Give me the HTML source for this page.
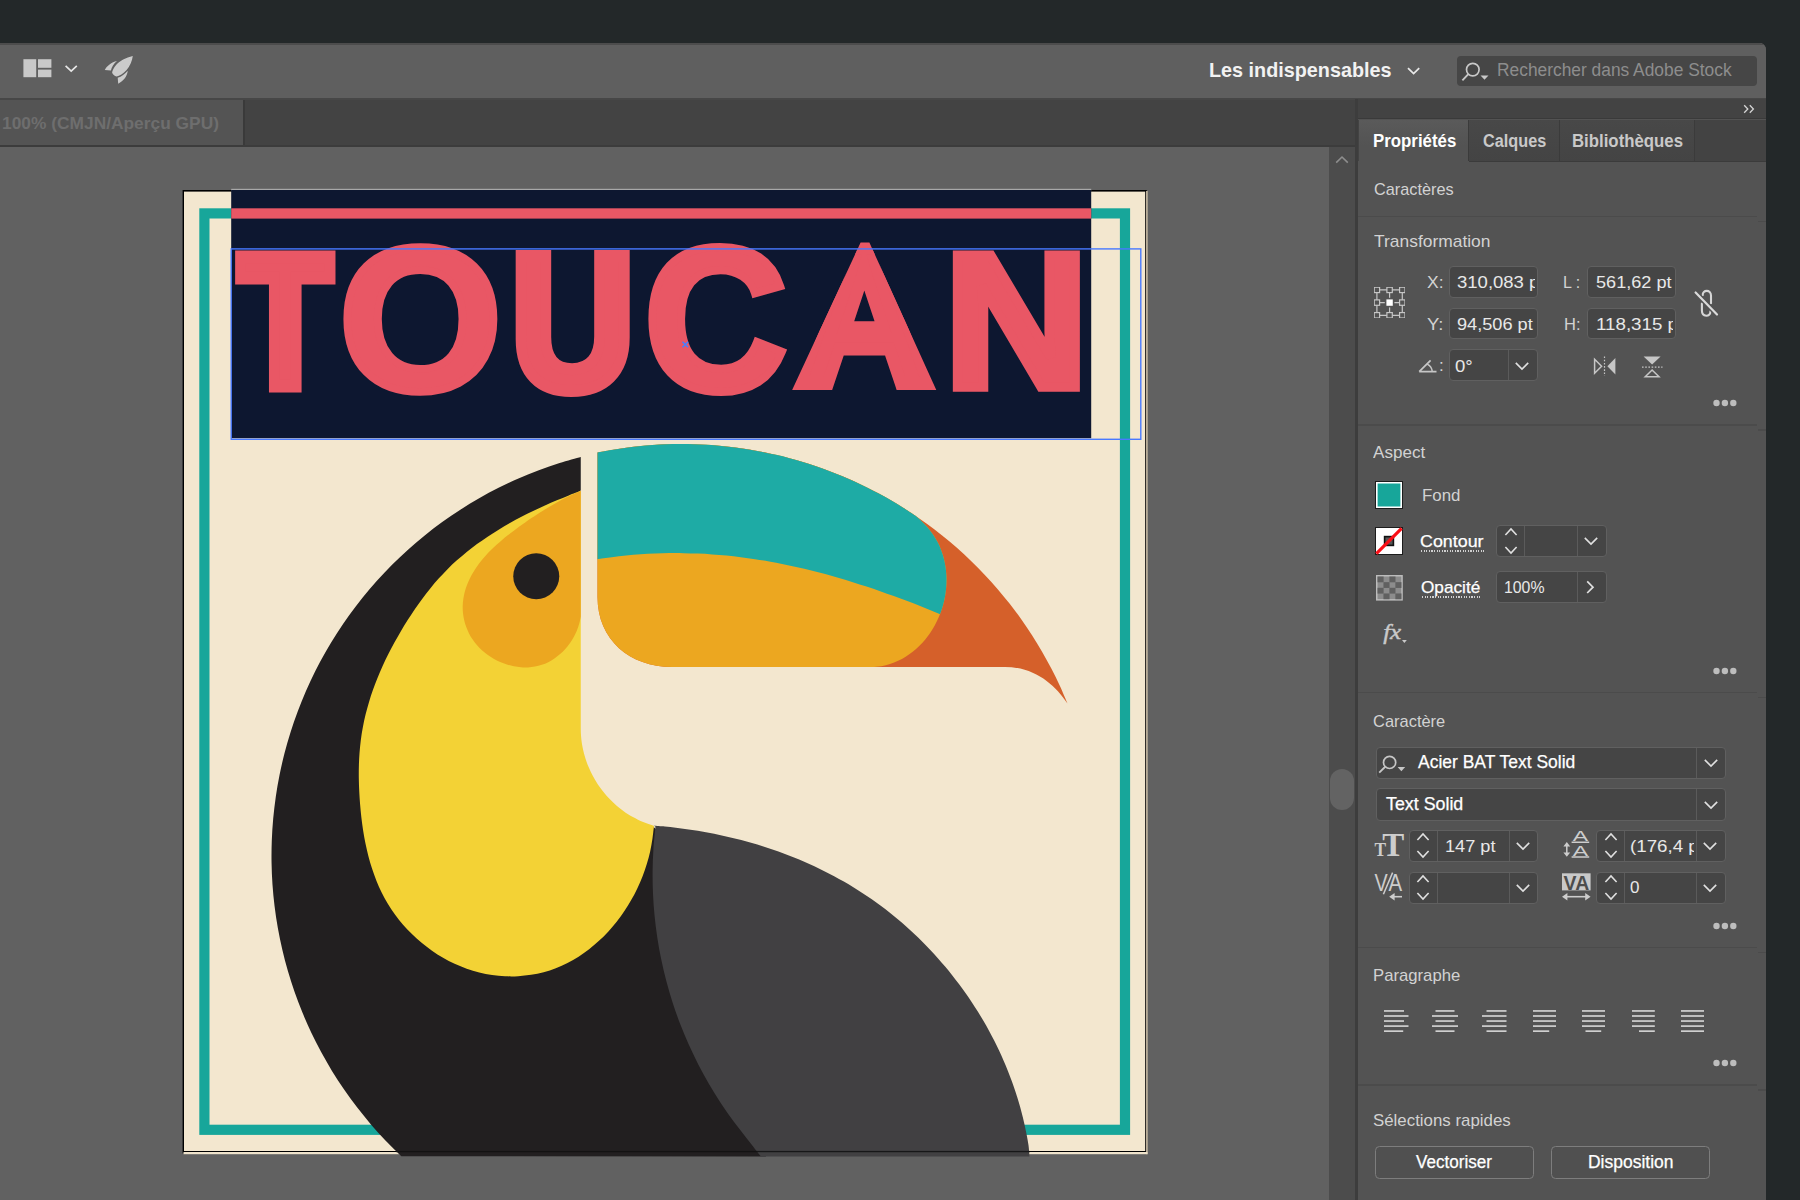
<!DOCTYPE html>
<html lang="fr"><head><meta charset="utf-8"><title>Toucan</title>
<style>
*{box-sizing:border-box;margin:0;padding:0}
html,body{width:1800px;height:1200px;overflow:hidden;background:#232829;font-family:"Liberation Sans",sans-serif;}
.abs{position:absolute}
#win{position:absolute;left:0;top:43px;width:1766px;height:1157px;background:#606060;border-top-right-radius:6.5px;overflow:hidden}
#toolbar{position:absolute;left:0;top:0;width:1766px;height:55px;background:#5f5f5f;border-top:2px solid #4c4c4c}
#tabbar{position:absolute;left:0;top:55px;width:1357px;height:104px;}
.t{position:absolute;white-space:nowrap;line-height:1;transform-origin:0 0}
</style></head><body>
<div id="win">
 <div id="toolbar"></div>
 <!-- line under toolbar -->
 <div class="abs" style="left:0;top:54.5px;width:1766px;height:2px;background:#474747"></div>
 <!-- doc tab bar -->
 <div class="abs" style="left:0;top:56.5px;width:1357px;height:46px;background:#434343"></div>
 <div class="abs" style="left:0;top:56.5px;width:245px;height:46px;background:#545454;border-right:2px solid #3a3a3a"></div>
 <div class="abs" style="left:0;top:102px;width:1357px;height:2px;background:#3c3c3c"></div>
 <!-- canvas -->
 <div class="abs" style="left:0;top:104px;width:1329px;height:1053px;background:#616161"></div>
 <!-- scrollbar -->
 <div class="abs" style="left:1328.5px;top:104px;width:27px;height:1053px;background:#4c4c4c"></div>
 <div class="abs" style="left:1330px;top:725.5px;width:24px;height:41.5px;border-radius:12px;background:#636363"></div>
 <svg class="abs" style="left:1334px;top:112px" width="16" height="10" viewBox="0 0 16 10"><path d="M2.2,7.6 L8,2 L13.8,7.6" fill="none" stroke="#8e8e8e" stroke-width="1.6"/></svg>
 <div class="abs" style="left:1355px;top:56px;width:3px;height:1101px;background:#3d3d3d"></div>
 <!-- toolbar icons -->
 <svg class="abs" style="left:22px;top:12px" width="112" height="30" viewBox="22 55 112 30">
  <rect x="23.4" y="59.2" width="12.8" height="18" fill="#c9c9c9"/><rect x="38" y="59.2" width="13.4" height="8.6" fill="#c9c9c9"/><rect x="38" y="69.6" width="13.4" height="7.6" fill="#c9c9c9"/>
  <path d="M65.6,65.8 L71.2,71 L76.8,65.8" fill="none" stroke="#e6e6e6" stroke-width="1.7"/>
  <path d="M132.8,55.9 C126,57.5 119.5,60.8 116.5,64.5 C113.8,67.8 112.3,70.5 112.1,72.6 C112.4,74.3 114.6,76.4 116.6,76.4 C119.5,76 123.2,73.6 126.6,70 C129.8,66.4 132.2,61 132.8,55.9Z M117,60.9 C111.5,62 106.8,65.8 104.8,70 L110.9,70.5 C111.6,66.8 113.8,63.6 117,60.9Z M127.7,70.8 C127.4,76 123.6,81 118.2,83.7 L117.7,77.8 C121.5,76.6 125,74.2 127.7,70.8Z" fill="#cbcbcb"/>
 </svg>
 <svg class="abs" style="left:1405px;top:22px" width="18" height="12" viewBox="0 0 18 12"><path d="M3,3.2 L8.6,8.6 L14.2,3.2" fill="none" stroke="#e8e8e8" stroke-width="1.8"/></svg>
 <div class="abs" style="left:1456.5px;top:12.8px;width:300.5px;height:30.4px;background:#464646;border-radius:4px"></div>
 <svg class="abs" style="left:1460px;top:18px" width="32" height="22" viewBox="0 0 32 22"><circle cx="12.8" cy="8.6" r="6.3" fill="none" stroke="#c8c8c8" stroke-width="1.7"/><path d="M8.3,13.2 L2.4,19.4" stroke="#c8c8c8" stroke-width="1.9"/><path d="M20.5,14.4 h8 l-4,4.4z" fill="#c8c8c8"/></svg>
<svg id="art" width="1329" height="1053" viewBox="0 147 1329 1053" style="position:absolute;left:0;top:104px">
<rect x="182.6" y="190" width="964.2" height="963.4" fill="#000"/>
<rect x="1146" y="191" width="1.8" height="963.2" fill="#b9ad98"/>
<rect x="183.5" y="1152" width="964" height="2.2" fill="#efe3cb"/>
<rect x="184" y="191.6" width="961.2" height="959.4" fill="#f3e7cf"/>
<rect x="204.4" y="213.4" width="920.6" height="916.4" fill="none" stroke="#17a69a" stroke-width="10.2"/>
<rect x="231.2" y="188.8" width="860" height="2" fill="#a8a8a8"/>
<rect x="231.2" y="190" width="860" height="248.2" fill="#0d1730"/>
<rect x="231.2" y="208.3" width="860" height="10.3" fill="#e95765"/>
<path d="M580.75,457.02 C577.23,458.03 566.60,460.86 559.61,463.07 C552.63,465.27 545.69,467.66 538.83,470.24 C531.97,472.81 525.17,475.57 518.45,478.50 C511.74,481.44 505.10,484.56 498.55,487.85 C492.00,491.14 485.53,494.60 479.17,498.24 C472.81,501.87 466.54,505.68 460.38,509.65 C454.22,513.62 448.15,517.75 442.22,522.04 C436.28,526.34 430.44,530.79 424.74,535.39 C419.04,539.99 413.45,544.76 408.01,549.65 C402.56,554.55 397.23,559.61 392.06,564.79 C386.88,569.97 381.83,575.30 376.93,580.75 C372.04,586.20 367.28,591.79 362.69,597.50 C358.09,603.20 353.64,609.04 349.35,614.98 C345.07,620.92 340.93,626.99 336.97,633.15 C333.01,639.31 329.20,645.59 325.57,651.96 C321.95,658.32 318.48,664.79 315.20,671.34 C311.91,677.89 308.80,684.54 305.87,691.25 C302.94,697.97 300.19,704.77 297.62,711.64 C295.05,718.50 292.67,725.44 290.47,732.43 C288.27,739.42 286.26,746.48 284.44,753.57 C282.61,760.67 280.98,767.82 279.54,775.01 C278.10,782.19 276.85,789.42 275.79,796.68 C274.74,803.93 273.88,811.21 273.21,818.51 C272.54,825.81 272.07,833.13 271.79,840.45 C271.52,847.77 271.44,855.11 271.55,862.44 C271.66,869.77 271.98,877.10 272.48,884.41 C272.99,891.72 273.69,899.02 274.58,906.30 C275.48,913.57 276.57,920.83 277.85,928.04 C279.13,935.25 280.60,942.44 282.27,949.58 C283.93,956.71 285.79,963.82 287.83,970.85 C289.87,977.89 292.11,984.88 294.52,991.80 C296.94,998.71 299.54,1005.58 302.32,1012.36 C305.10,1019.13 308.07,1025.85 311.21,1032.47 C314.34,1039.09 317.66,1045.64 321.15,1052.08 C324.64,1058.52 328.30,1064.88 332.13,1071.13 C335.95,1077.38 339.95,1083.54 344.11,1089.57 C348.26,1095.61 352.58,1101.54 357.05,1107.34 C361.52,1113.15 366.15,1118.84 370.92,1124.40 C375.70,1129.96 380.63,1135.40 385.69,1140.70 C390.75,1145.99 398.70,1153.60 401.30,1156.18 L766,1156.5 L720,1000 L690,862 L653.10,826.50 C652.19,826.24 649.42,825.51 647.62,824.92 C645.81,824.32 644.02,823.64 642.26,822.93 C640.50,822.21 638.77,821.44 637.06,820.61 C635.35,819.79 633.67,818.92 632.01,817.99 C630.36,817.07 628.73,816.09 627.14,815.07 C625.54,814.06 623.97,812.99 622.44,811.88 C620.91,810.77 619.40,809.61 617.94,808.41 C616.47,807.22 615.03,805.98 613.63,804.70 C612.23,803.42 610.86,802.10 609.53,800.75 C608.21,799.39 606.91,798.00 605.66,796.58 C604.41,795.15 603.19,793.69 602.01,792.20 C600.84,790.71 599.70,789.18 598.61,787.63 C597.52,786.07 596.46,784.49 595.46,782.88 C594.45,781.27 593.48,779.63 592.56,777.97 C591.64,776.31 590.77,774.62 589.94,772.91 C589.11,771.20 588.33,769.47 587.60,767.72 C586.87,765.97 586.18,764.20 585.55,762.41 C584.92,760.62 584.33,758.82 583.80,757.00 C583.27,755.18 582.79,753.34 582.36,751.49 C581.94,749.65 581.57,747.79 581.25,745.92 C580.93,744.05 580.67,742.17 580.46,740.28 C580.26,738.40 580.12,736.50 580.02,734.60 C579.92,732.70 579.88,729.85 579.85,728.90 L579.75,492.5 L580.75,490 Z" fill="#221f20"/>
<path d="M580.75,490.80 C578.75,491.57 572.75,493.86 568.76,495.45 C564.77,497.04 560.80,498.66 556.83,500.34 C552.86,502.01 548.88,503.74 544.93,505.52 C540.97,507.30 537.02,509.13 533.11,511.02 C529.19,512.91 525.28,514.85 521.42,516.86 C517.55,518.87 513.71,520.94 509.91,523.07 C506.12,525.20 502.35,527.40 498.64,529.66 C494.93,531.93 491.26,534.26 487.65,536.67 C484.04,539.07 480.48,541.55 476.99,544.10 C473.50,546.66 470.07,549.28 466.71,551.99 C463.36,554.70 460.07,557.49 456.87,560.36 C453.67,563.23 450.54,566.19 447.51,569.23 C444.47,572.27 441.52,575.40 438.65,578.59 C435.78,581.79 432.99,585.07 430.27,588.41 C427.55,591.75 424.91,595.16 422.34,598.63 C419.76,602.09 417.26,605.63 414.81,609.20 C412.37,612.77 409.99,616.40 407.67,620.07 C405.34,623.74 403.08,627.45 400.87,631.19 C398.66,634.94 396.50,638.72 394.41,642.53 C392.33,646.35 390.30,650.20 388.35,654.08 C386.41,657.97 384.52,661.88 382.73,665.83 C380.94,669.78 379.22,673.75 377.59,677.76 C375.97,681.77 374.43,685.81 372.99,689.87 C371.55,693.94 370.20,698.03 368.96,702.15 C367.73,706.27 366.59,710.42 365.56,714.59 C364.54,718.76 363.63,722.96 362.84,727.18 C362.05,731.40 361.38,735.64 360.83,739.90 C360.28,744.16 359.86,748.45 359.54,752.75 C359.21,757.04 359.01,761.36 358.89,765.68 C358.77,770.00 358.76,774.34 358.82,778.68 C358.89,783.02 359.04,787.37 359.26,791.71 C359.48,796.05 359.77,800.40 360.13,804.74 C360.48,809.08 360.90,813.42 361.41,817.74 C361.92,822.07 362.49,826.38 363.17,830.67 C363.85,834.96 364.61,839.24 365.48,843.48 C366.35,847.73 367.32,851.95 368.41,856.14 C369.50,860.32 370.69,864.49 372.02,868.59 C373.35,872.69 374.80,876.76 376.40,880.75 C378.00,884.75 379.74,888.69 381.64,892.54 C383.54,896.38 385.60,900.16 387.82,903.83 C390.04,907.50 392.44,911.08 394.97,914.55 C397.51,918.02 400.20,921.40 403.03,924.66 C405.86,927.91 408.84,931.06 411.94,934.09 C415.03,937.11 418.27,940.02 421.62,942.79 C424.96,945.56 428.43,948.22 432.00,950.71 C435.57,953.20 439.26,955.56 443.03,957.74 C446.80,959.91 450.67,961.94 454.62,963.78 C458.57,965.61 462.61,967.28 466.71,968.73 C470.81,970.19 475.00,971.46 479.23,972.50 C483.46,973.55 487.77,974.39 492.08,975.02 C496.39,975.65 500.76,976.06 505.11,976.26 C509.45,976.46 513.83,976.45 518.15,976.22 C522.48,975.98 526.80,975.54 531.05,974.87 C535.31,974.20 539.53,973.31 543.66,972.20 C547.79,971.09 551.85,969.75 555.82,968.22 C559.79,966.69 563.68,964.93 567.48,963.00 C571.27,961.07 574.98,958.93 578.58,956.64 C582.19,954.34 585.70,951.86 589.10,949.23 C592.50,946.60 595.80,943.80 598.98,940.87 C602.16,937.94 605.24,934.86 608.19,931.66 C611.13,928.46 613.97,925.12 616.67,921.69 C619.38,918.26 621.96,914.70 624.40,911.06 C626.84,907.42 629.16,903.68 631.33,899.87 C633.50,896.06 635.53,892.15 637.41,888.20 C639.29,884.26 641.03,880.23 642.60,876.17 C644.18,872.11 645.61,868.00 646.87,863.86 C648.13,859.73 649.23,855.55 650.16,851.38 C651.09,847.20 651.80,843.04 652.44,838.81 C653.08,834.58 653.74,828.13 654.00,826.00 C653.09,825.34 650.32,824.61 648.52,824.02 C646.71,823.42 644.92,822.74 643.16,822.03 C641.40,821.31 639.67,820.54 637.96,819.71 C636.25,818.89 634.57,818.02 632.91,817.09 C631.26,816.17 629.63,815.19 628.04,814.17 C626.44,813.16 624.87,812.09 623.34,810.98 C621.81,809.87 620.30,808.71 618.84,807.51 C617.37,806.32 615.93,805.08 614.53,803.80 C613.13,802.52 611.76,801.20 610.43,799.85 C609.11,798.49 607.81,797.10 606.56,795.68 C605.31,794.25 604.09,792.79 602.91,791.30 C601.74,789.81 600.60,788.28 599.51,786.73 C598.42,785.17 597.36,783.59 596.36,781.98 C595.35,780.37 594.38,778.73 593.46,777.07 C592.54,775.41 591.67,773.72 590.84,772.01 C590.01,770.30 589.23,768.57 588.50,766.82 C587.77,765.07 587.08,763.30 586.45,761.51 C585.82,759.72 585.23,757.92 584.70,756.10 C584.17,754.28 583.69,752.44 583.26,750.59 C582.84,748.75 582.47,746.89 582.15,745.02 C581.83,743.15 581.57,741.27 581.36,739.38 C581.16,737.50 581.02,735.60 580.92,733.70 C580.82,731.80 580.78,728.95 580.75,728.00 Z" fill="#f3d235"/>
<path d="M580.75,491.00 C579.63,491.46 576.24,492.76 574.05,493.74 C571.87,494.72 569.75,495.80 567.63,496.86 C565.51,497.92 563.41,499.00 561.33,500.11 C559.24,501.22 557.17,502.34 555.12,503.49 C553.06,504.64 551.03,505.81 549.00,507.01 C546.97,508.20 544.96,509.42 542.96,510.65 C540.96,511.89 538.97,513.15 536.98,514.43 C535.00,515.71 533.03,517.02 531.06,518.35 C529.10,519.67 527.14,521.02 525.19,522.39 C523.23,523.77 521.28,525.16 519.34,526.58 C517.39,527.99 515.44,529.43 513.51,530.89 C511.58,532.36 509.64,533.84 507.73,535.36 C505.82,536.87 503.92,538.41 502.06,539.99 C500.19,541.56 498.35,543.16 496.54,544.80 C494.74,546.44 492.96,548.11 491.24,549.82 C489.52,551.53 487.83,553.27 486.20,555.05 C484.58,556.84 483.00,558.66 481.49,560.53 C479.98,562.39 478.53,564.30 477.16,566.26 C475.79,568.21 474.48,570.21 473.26,572.26 C472.04,574.31 470.89,576.42 469.85,578.56 C468.81,580.70 467.84,582.89 467.00,585.11 C466.17,587.32 465.42,589.58 464.81,591.85 C464.20,594.13 463.70,596.44 463.35,598.75 C463.00,601.07 462.78,603.41 462.71,605.75 C462.64,608.09 462.73,610.45 462.96,612.79 C463.19,615.12 463.57,617.47 464.09,619.77 C464.61,622.07 465.28,624.36 466.08,626.59 C466.88,628.82 467.83,631.02 468.90,633.14 C469.97,635.26 471.18,637.34 472.51,639.32 C473.84,641.30 475.30,643.21 476.87,645.02 C478.44,646.83 480.14,648.56 481.91,650.18 C483.69,651.80 485.58,653.34 487.53,654.76 C489.49,656.18 491.54,657.50 493.64,658.71 C495.74,659.91 497.91,661.01 500.13,661.98 C502.34,662.95 504.61,663.81 506.90,664.54 C509.20,665.26 511.54,665.86 513.88,666.32 C516.22,666.78 518.59,667.11 520.95,667.29 C523.30,667.47 525.68,667.52 528.02,667.40 C530.36,667.29 532.70,667.03 534.99,666.61 C537.28,666.18 539.56,665.60 541.78,664.86 C543.99,664.12 546.17,663.20 548.27,662.14 C550.38,661.09 552.44,659.87 554.41,658.53 C556.38,657.19 558.29,655.71 560.10,654.12 C561.91,652.53 563.65,650.81 565.27,649.01 C566.90,647.21 568.44,645.29 569.85,643.30 C571.27,641.32 572.58,639.23 573.76,637.09 C574.94,634.96 576.00,632.73 576.91,630.48 C577.83,628.22 578.61,625.86 579.25,623.56 C579.88,621.26 580.50,617.84 580.75,616.70 Z" fill="#eca720"/>
<circle cx="536.25" cy="576.25" r="23" fill="#221f20"/>
<path d="M653.80,825.80 C655.64,825.92 661.16,826.22 664.83,826.54 C668.50,826.86 672.15,827.30 675.82,827.74 C679.48,828.18 683.14,828.66 686.80,829.18 C690.45,829.70 694.11,830.26 697.76,830.86 C701.41,831.47 705.06,832.11 708.70,832.80 C712.34,833.48 715.97,834.21 719.60,834.98 C723.23,835.75 726.85,836.56 730.46,837.42 C734.07,838.27 737.67,839.17 741.26,840.11 C744.84,841.05 748.42,842.03 751.99,843.06 C755.55,844.09 759.10,845.16 762.64,846.27 C766.18,847.39 769.70,848.54 773.20,849.75 C776.71,850.95 780.20,852.19 783.67,853.48 C787.14,854.78 790.59,856.11 794.03,857.49 C797.46,858.87 800.87,860.30 804.26,861.77 C807.65,863.24 811.02,864.76 814.37,866.32 C817.72,867.88 821.04,869.49 824.34,871.14 C827.64,872.79 830.91,874.49 834.16,876.23 C837.41,877.98 840.63,879.77 843.83,881.60 C847.02,883.44 850.19,885.32 853.33,887.24 C856.47,889.17 859.58,891.14 862.66,893.16 C865.74,895.18 868.79,897.24 871.81,899.35 C874.82,901.46 877.81,903.62 880.77,905.82 C883.72,908.02 886.65,910.26 889.54,912.55 C892.43,914.83 895.28,917.17 898.11,919.54 C900.93,921.91 903.72,924.32 906.48,926.78 C909.23,929.23 911.96,931.73 914.64,934.27 C917.33,936.81 919.98,939.38 922.59,942.00 C925.21,944.61 927.79,947.27 930.33,949.96 C932.87,952.66 935.37,955.39 937.84,958.15 C940.30,960.92 942.73,963.72 945.12,966.56 C947.51,969.40 949.85,972.27 952.16,975.17 C954.47,978.08 956.73,981.02 958.96,983.99 C961.18,986.96 963.36,989.96 965.50,993.00 C967.64,996.03 969.73,999.09 971.78,1002.19 C973.83,1005.28 975.84,1008.40 977.80,1011.55 C979.76,1014.70 981.67,1017.88 983.54,1021.08 C985.41,1024.29 987.23,1027.52 989.00,1030.77 C990.78,1034.03 992.50,1037.31 994.18,1040.61 C995.85,1043.91 997.48,1047.24 999.06,1050.59 C1000.63,1053.94 1002.16,1057.31 1003.63,1060.70 C1005.11,1064.10 1006.53,1067.51 1007.90,1070.94 C1009.27,1074.37 1010.59,1077.82 1011.85,1081.29 C1013.11,1084.76 1014.32,1088.25 1015.48,1091.75 C1016.63,1095.26 1017.73,1098.78 1018.77,1102.31 C1019.82,1105.85 1020.80,1109.40 1021.73,1112.96 C1022.66,1116.52 1023.53,1120.10 1024.34,1123.69 C1025.16,1127.28 1025.91,1130.88 1026.61,1134.49 C1027.30,1138.11 1028.03,1141.70 1028.51,1145.36 C1028.99,1149.03 1029.33,1154.64 1029.50,1156.50 L761.00,1156.50 C758.70,1153.57 751.77,1144.78 747.18,1138.91 C742.60,1133.05 737.88,1127.30 733.47,1121.32 C729.06,1115.33 724.81,1109.22 720.72,1103.01 C716.64,1096.80 712.72,1090.47 708.98,1084.05 C705.24,1077.62 701.66,1071.09 698.27,1064.48 C694.88,1057.86 691.66,1051.15 688.63,1044.36 C685.60,1037.57 682.75,1030.69 680.09,1023.75 C677.43,1016.81 674.95,1009.79 672.66,1002.72 C670.38,995.65 668.28,988.50 666.38,981.32 C664.48,974.13 662.77,966.88 661.26,959.60 C659.74,952.33 658.42,945.00 657.31,937.65 C656.19,930.30 655.26,922.91 654.54,915.51 C653.82,908.12 653.30,900.69 652.97,893.26 C652.65,885.84 652.53,878.39 652.60,870.96 C652.68,863.53 652.95,856.08 653.43,848.67 C653.91,841.25 655.12,830.15 655.46,826.45 Z" fill="#414042"/>
<path d="M597.5,452.5 C600.69,452.06 610.14,450.19 616.48,449.18 C622.82,448.17 629.20,447.31 635.58,446.60 C641.96,445.89 648.36,445.32 654.77,444.91 C661.18,444.49 667.60,444.22 674.02,444.10 C680.44,443.98 686.87,444.01 693.29,444.19 C699.70,444.37 706.12,444.69 712.53,445.17 C718.93,445.64 725.33,446.26 731.70,447.03 C738.08,447.80 744.44,448.72 750.77,449.79 C757.10,450.85 763.42,452.06 769.69,453.42 C775.97,454.77 782.22,456.28 788.43,457.92 C794.63,459.57 800.81,461.36 806.93,463.29 C813.06,465.22 819.14,467.29 825.17,469.50 C831.20,471.71 837.18,474.06 843.10,476.55 C849.02,479.04 854.89,481.67 860.69,484.43 C866.48,487.18 872.22,490.08 877.89,493.10 C883.55,496.13 889.15,499.29 894.67,502.57 C900.19,505.85 905.63,509.27 910.99,512.80 C916.35,516.33 921.64,520.00 926.83,523.78 C932.02,527.55 937.13,531.46 942.14,535.47 C947.15,539.49 952.07,543.62 956.89,547.86 C961.71,552.11 966.44,556.46 971.06,560.92 C975.68,565.38 980.20,569.96 984.60,574.63 C989.01,579.30 993.31,584.07 997.50,588.94 C1001.69,593.81 1005.76,598.78 1009.72,603.84 C1013.68,608.89 1017.52,614.05 1021.24,619.28 C1024.96,624.51 1028.56,629.84 1032.03,635.24 C1035.50,640.64 1038.85,646.13 1042.07,651.68 C1045.29,657.24 1048.39,662.88 1051.34,668.57 C1054.30,674.27 1057.13,680.05 1059.82,685.87 C1062.51,691.70 1066.22,700.60 1067.49,703.55 C1055,685 1035,667 1005,667 L672,667 C630,667 597.5,640 597.5,597 Z" fill="#d5602a"/>
<path d="M597.5,452.5 C599.79,452.21 606.58,450.85 611.13,450.07 C615.67,449.28 620.23,448.58 624.80,447.95 C629.37,447.31 633.95,446.76 638.54,446.28 C643.12,445.80 647.72,445.40 652.32,445.07 C656.92,444.75 661.53,444.50 666.14,444.32 C670.75,444.15 675.36,444.05 679.97,444.03 C684.58,444.01 689.20,444.07 693.81,444.20 C698.42,444.34 703.03,444.55 707.63,444.83 C712.24,445.12 716.84,445.48 721.43,445.92 C726.02,446.36 730.60,446.88 735.18,447.47 C739.75,448.06 744.32,448.73 748.87,449.47 C753.42,450.21 757.96,451.03 762.49,451.93 C767.01,452.82 771.52,453.79 776.02,454.84 C780.51,455.88 784.99,457.00 789.44,458.19 C793.90,459.38 798.33,460.65 802.75,461.99 C807.16,463.33 811.55,464.74 815.92,466.23 C820.29,467.72 824.63,469.28 828.94,470.91 C833.26,472.54 837.55,474.24 841.80,476.01 C846.06,477.78 850.29,479.63 854.49,481.54 C858.69,483.45 862.85,485.44 866.98,487.49 C871.11,489.54 875.21,491.66 879.27,493.85 C883.33,496.04 887.36,498.29 891.34,500.61 C895.33,502.93 899.28,505.32 903.18,507.77 C907.09,510.23 912.85,514.07 914.78,515.33 C915.92,516.31 919.43,519.19 921.61,521.25 C923.78,523.31 925.93,525.45 927.85,527.68 C929.78,529.91 931.55,532.25 933.17,534.65 C934.79,537.05 936.25,539.54 937.57,542.08 C938.89,544.63 940.06,547.25 941.08,549.91 C942.10,552.57 942.97,555.29 943.70,558.04 C944.43,560.80 945.01,563.60 945.46,566.42 C945.90,569.23 946.20,572.09 946.37,574.95 C946.53,577.81 946.55,580.69 946.44,583.56 C946.33,586.43 946.08,589.32 945.69,592.18 C945.31,595.04 944.79,597.91 944.15,600.73 C943.50,603.56 942.72,606.37 941.81,609.14 C940.91,611.90 939.87,614.64 938.71,617.32 C937.55,619.99 936.26,622.63 934.86,625.19 C933.46,627.75 931.93,630.26 930.30,632.67 C928.67,635.08 926.92,637.42 925.07,639.65 C923.21,641.89 921.25,644.04 919.19,646.06 C917.13,648.08 914.96,650.01 912.71,651.79 C910.45,653.57 908.10,655.24 905.66,656.75 C903.22,658.27 900.68,659.65 898.07,660.86 C895.46,662.07 892.76,663.14 889.98,664.02 C887.21,664.90 884.35,665.64 881.43,666.13 C878.52,666.63 873.99,666.86 872.50,667.00 L672,667 C630,667 597.5,640 597.5,597 Z" fill="#eca720"/>
<clipPath id="tc"><path d="M597.50,559.25 C599.87,558.92 606.98,557.88 611.74,557.27 C616.51,556.66 621.32,556.07 626.11,555.58 C630.90,555.09 635.69,554.68 640.48,554.33 C645.27,553.99 650.06,553.72 654.85,553.52 C659.64,553.32 664.44,553.19 669.23,553.12 C674.01,553.06 678.80,553.07 683.59,553.15 C688.37,553.22 693.15,553.37 697.93,553.57 C702.71,553.78 707.48,554.06 712.25,554.40 C717.02,554.74 721.79,555.14 726.54,555.61 C731.30,556.07 736.05,556.61 740.80,557.20 C745.54,557.79 750.28,558.44 755.01,559.15 C759.73,559.87 764.45,560.64 769.16,561.47 C773.87,562.30 778.57,563.19 783.26,564.14 C787.95,565.09 792.63,566.09 797.30,567.15 C801.97,568.20 806.63,569.31 811.28,570.47 C815.92,571.63 820.56,572.85 825.19,574.10 C829.81,575.36 834.43,576.67 839.03,578.01 C843.64,579.36 848.23,580.75 852.81,582.19 C857.39,583.62 861.97,585.09 866.53,586.60 C871.09,588.11 875.64,589.66 880.18,591.24 C884.72,592.82 889.24,594.44 893.76,596.09 C898.28,597.74 902.78,599.42 907.28,601.12 C911.77,602.83 916.25,604.56 920.73,606.32 C925.20,608.08 929.66,609.86 934.11,611.67 C938.55,613.47 942.99,615.30 947.42,617.14 C951.84,618.98 956.26,620.85 960.66,622.72 C965.06,624.60 969.46,626.49 973.84,628.39 C978.22,630.30 982.58,632.20 986.94,634.14 C991.30,636.07 997.82,639.02 1000.00,640.00 L1100,640 L1100,400 L500,400 L500,559.25 Z"/></clipPath>
<path d="M597.5,452.5 C599.79,452.21 606.58,450.85 611.13,450.07 C615.67,449.28 620.23,448.58 624.80,447.95 C629.37,447.31 633.95,446.76 638.54,446.28 C643.12,445.80 647.72,445.40 652.32,445.07 C656.92,444.75 661.53,444.50 666.14,444.32 C670.75,444.15 675.36,444.05 679.97,444.03 C684.58,444.01 689.20,444.07 693.81,444.20 C698.42,444.34 703.03,444.55 707.63,444.83 C712.24,445.12 716.84,445.48 721.43,445.92 C726.02,446.36 730.60,446.88 735.18,447.47 C739.75,448.06 744.32,448.73 748.87,449.47 C753.42,450.21 757.96,451.03 762.49,451.93 C767.01,452.82 771.52,453.79 776.02,454.84 C780.51,455.88 784.99,457.00 789.44,458.19 C793.90,459.38 798.33,460.65 802.75,461.99 C807.16,463.33 811.55,464.74 815.92,466.23 C820.29,467.72 824.63,469.28 828.94,470.91 C833.26,472.54 837.55,474.24 841.80,476.01 C846.06,477.78 850.29,479.63 854.49,481.54 C858.69,483.45 862.85,485.44 866.98,487.49 C871.11,489.54 875.21,491.66 879.27,493.85 C883.33,496.04 887.36,498.29 891.34,500.61 C895.33,502.93 899.28,505.32 903.18,507.77 C907.09,510.23 912.85,514.07 914.78,515.33 C915.92,516.31 919.43,519.19 921.61,521.25 C923.78,523.31 925.93,525.45 927.85,527.68 C929.78,529.91 931.55,532.25 933.17,534.65 C934.79,537.05 936.25,539.54 937.57,542.08 C938.89,544.63 940.06,547.25 941.08,549.91 C942.10,552.57 942.97,555.29 943.70,558.04 C944.43,560.80 945.01,563.60 945.46,566.42 C945.90,569.23 946.20,572.09 946.37,574.95 C946.53,577.81 946.55,580.69 946.44,583.56 C946.33,586.43 946.08,589.32 945.69,592.18 C945.31,595.04 944.79,597.91 944.15,600.73 C943.50,603.56 942.72,606.37 941.81,609.14 C940.91,611.90 939.87,614.64 938.71,617.32 C937.55,619.99 936.26,622.63 934.86,625.19 C933.46,627.75 931.93,630.26 930.30,632.67 C928.67,635.08 926.92,637.42 925.07,639.65 C923.21,641.89 921.25,644.04 919.19,646.06 C917.13,648.08 914.96,650.01 912.71,651.79 C910.45,653.57 908.10,655.24 905.66,656.75 C903.22,658.27 900.68,659.65 898.07,660.86 C895.46,662.07 892.76,663.14 889.98,664.02 C887.21,664.90 884.35,665.64 881.43,666.13 C878.52,666.63 873.99,666.86 872.50,667.00 L672,667 C630,667 597.5,640 597.5,597 Z" fill="#1eaba5" clip-path="url(#tc)"/>
<rect x="396" y="1150.9" width="634" height="1.3" fill="#111" opacity=".85"/>
<g font-family="&quot;Liberation Sans&quot;, sans-serif" font-weight="bold" font-size="200" fill="#e95765" stroke="#e95765" stroke-linejoin="miter"><text stroke-width="14" transform="matrix(0.7614 0 0 0.9377 238.81 385.67)">T</text><text stroke-width="7.5" transform="matrix(1.0510 0 0 1.0220 338.80 390.17)">O</text><text stroke-width="12.5" transform="matrix(0.8591 0 0 0.9645 510.65 388.58)">U</text><text stroke-width="8" transform="matrix(0.9907 0 0 1.0220 644.34 390.17)">C</text><clipPath id="ac"><path d="M780,392 L791.2,392 L860.6,242.5 L869.4,242.5 L937.2,392 L950,392 L950,420 L780,420Z"/></clipPath><g clip-path="url(#ac)"><text stroke-width="13" transform="matrix(0.9539 0 0 0.9821 795.52 384.43)">A</text></g><text stroke-width="10" transform="matrix(0.9961 0 0 0.9568 944.53 386.52)">N</text></g>
<rect x="231.2" y="248.9" width="909.6" height="190.4" fill="none" stroke="#4879ff" stroke-width="1.4"/>
<path d="M682.5,341.7l5.6,5.6m0,-5.6l-5.6,5.6" stroke="#4a7dff" stroke-width="1.6" fill="none"/>
</svg>
<div class="abs" style="left:0;top:-43px;width:1766px;height:1200px">
<div class="abs" style="left:1358.00px;top:99.00px;width:408.00px;height:1101.00px;background:#535353"></div>
<div class="abs" style="left:1358.00px;top:99.00px;width:408.00px;height:19.00px;background:#434343"></div>
<div class="abs" style="left:1358.00px;top:117.70px;width:408.00px;height:1.80px;background:#3a3a3a"></div>
<div class="abs" style="left:1358.00px;top:119.50px;width:408.00px;height:41.50px;background:#434343"></div>
<div class="abs" style="left:1469.00px;top:119.50px;width:226.00px;height:41.50px;background:linear-gradient(#484848,#444444)"></div>
<div class="abs" style="left:1358.50px;top:119.50px;width:110.20px;height:43.00px;background:linear-gradient(#5a5a5a,#535353 60%)"></div>
<div class="abs" style="left:1467.90px;top:119.50px;width:1.60px;height:41.50px;background:#3b3b3b"></div>
<div class="abs" style="left:1558.90px;top:119.50px;width:1.60px;height:41.50px;background:#3b3b3b"></div>
<div class="abs" style="left:1693.90px;top:119.50px;width:1.60px;height:41.50px;background:#3b3b3b"></div>
<div class="abs" style="left:1468.70px;top:160.50px;width:297.30px;height:1.80px;background:#3b3b3b"></div>
<svg class="abs" style="left:1742.00px;top:103.00px" width="14" height="12" viewBox="0 0 14 12"><path d="M2.2,2.2 L5.8,6 L2.2,9.8 M7.8,2.2 L11.4,6 L7.8,9.8" fill="none" stroke="#d4d4d4" stroke-width="1.3"/></svg>
<div class="abs" style="left:1358.00px;top:215.70px;width:399.00px;height:1.20px;background:#4b4b4b"></div>
<div class="abs" style="left:1757.50px;top:220.70px;width:8.50px;height:1.20px;background:#4b4b4b"></div>
<div class="abs" style="left:1358.00px;top:424.40px;width:399.00px;height:1.20px;background:#4b4b4b"></div>
<div class="abs" style="left:1757.50px;top:429.40px;width:8.50px;height:1.20px;background:#4b4b4b"></div>
<div class="abs" style="left:1358.00px;top:691.90px;width:399.00px;height:1.20px;background:#4b4b4b"></div>
<div class="abs" style="left:1757.50px;top:696.90px;width:8.50px;height:1.20px;background:#4b4b4b"></div>
<div class="abs" style="left:1358.00px;top:946.90px;width:399.00px;height:1.20px;background:#4b4b4b"></div>
<div class="abs" style="left:1757.50px;top:951.90px;width:8.50px;height:1.20px;background:#4b4b4b"></div>
<div class="abs" style="left:1358.00px;top:1084.40px;width:399.00px;height:1.20px;background:#4b4b4b"></div>
<div class="abs" style="left:1757.50px;top:1089.40px;width:8.50px;height:1.20px;background:#4b4b4b"></div>
<svg class="abs" style="left:1712.00px;top:397.50px" width="26" height="10" viewBox="0 0 26 10"><circle cx="4.5" cy="5" r="3.2" fill="#bdbdbd"/><circle cx="12.9" cy="5" r="3.2" fill="#bdbdbd"/><circle cx="21.3" cy="5" r="3.2" fill="#bdbdbd"/></svg>
<svg class="abs" style="left:1712.00px;top:666.25px" width="26" height="10" viewBox="0 0 26 10"><circle cx="4.5" cy="5" r="3.2" fill="#bdbdbd"/><circle cx="12.9" cy="5" r="3.2" fill="#bdbdbd"/><circle cx="21.3" cy="5" r="3.2" fill="#bdbdbd"/></svg>
<svg class="abs" style="left:1712.00px;top:920.75px" width="26" height="10" viewBox="0 0 26 10"><circle cx="4.5" cy="5" r="3.2" fill="#bdbdbd"/><circle cx="12.9" cy="5" r="3.2" fill="#bdbdbd"/><circle cx="21.3" cy="5" r="3.2" fill="#bdbdbd"/></svg>
<svg class="abs" style="left:1712.00px;top:1057.50px" width="26" height="10" viewBox="0 0 26 10"><circle cx="4.5" cy="5" r="3.2" fill="#bdbdbd"/><circle cx="12.9" cy="5" r="3.2" fill="#bdbdbd"/><circle cx="21.3" cy="5" r="3.2" fill="#bdbdbd"/></svg>
<div class="abs" style="left:1449.25px;top:265.75px;width:88.25px;height:31.75px;background:#454545;border:1px solid #606060;border-radius:4px;"></div>
<div class="abs" style="left:1586.75px;top:265.75px;width:89.00px;height:31.75px;background:#454545;border:1px solid #606060;border-radius:4px;"></div>
<div class="abs" style="left:1449.25px;top:307.50px;width:88.25px;height:31.75px;background:#454545;border:1px solid #606060;border-radius:4px;"></div>
<div class="abs" style="left:1586.75px;top:307.50px;width:89.00px;height:31.75px;background:#454545;border:1px solid #606060;border-radius:4px;"></div>
<div class="abs" style="left:1449.25px;top:349.25px;width:88.25px;height:31.25px;background:#454545;border:1px solid #606060;border-radius:4px;"></div>
<div class="abs" style="left:1508.15px;top:350.25px;width:1.20px;height:29.25px;background:#5b5b5b"></div>
<svg class="abs" style="left:1513.75px;top:359.60px" width="16" height="12" viewBox="0 0 16 12"><path d="M1.8,2.9 L8,9.1 L14.2,2.9" fill="none" stroke="#e0e0e0" stroke-width="1.6"/></svg>
<svg class="abs" style="left:1374.20px;top:287.20px" width="31.2" height="31.2" viewBox="0 0 31.2 31.2"><path d="M2.9,2.9H28.3V28.3H2.9Z M2.9,15.6H28.3 M15.6,2.9V28.3" fill="none" stroke="#c6c6c6" stroke-width="1.2"/><rect x="0.2" y="0.2" width="5.4" height="5.4" fill="#535353" stroke="#c6c6c6" stroke-width="1.2"/><rect x="0.2" y="12.9" width="5.4" height="5.4" fill="#535353" stroke="#c6c6c6" stroke-width="1.2"/><rect x="0.2" y="25.6" width="5.4" height="5.4" fill="#535353" stroke="#c6c6c6" stroke-width="1.2"/><rect x="12.9" y="0.2" width="5.4" height="5.4" fill="#535353" stroke="#c6c6c6" stroke-width="1.2"/><rect x="11.6" y="11.6" width="8" height="8" fill="#fff" stroke="#535353" stroke-width="1.6"/><rect x="12.9" y="25.6" width="5.4" height="5.4" fill="#535353" stroke="#c6c6c6" stroke-width="1.2"/><rect x="25.6" y="0.2" width="5.4" height="5.4" fill="#535353" stroke="#c6c6c6" stroke-width="1.2"/><rect x="25.6" y="12.9" width="5.4" height="5.4" fill="#535353" stroke="#c6c6c6" stroke-width="1.2"/><rect x="25.6" y="25.6" width="5.4" height="5.4" fill="#535353" stroke="#c6c6c6" stroke-width="1.2"/></svg>
<svg class="abs" style="left:1417.00px;top:357.00px" width="22" height="17" viewBox="0 0 22 17"><path d="M2.2,14.6 H19.5 M2.2,14.6 L13.6,3.4" fill="none" stroke="#c6c6c6" stroke-width="1.7"/><path d="M10.2,7.2 C13.2,8.6 14.9,11.2 15.2,14.4" fill="none" stroke="#c6c6c6" stroke-width="1.4"/></svg>
<svg class="abs" style="left:1592.00px;top:355.00px" width="26" height="22" viewBox="0 0 26 22"><path d="M2.6,4.2 L9.6,11.2 L2.6,18.2Z" fill="none" stroke="#c6c6c6" stroke-width="1.5"/><path d="M23.4,3 L15.4,11.2 L23.4,19.4Z" fill="#c6c6c6"/><path d="M12.5,1.5V21" stroke="#c6c6c6" stroke-width="1.2" stroke-dasharray="1.6,1.6"/></svg>
<svg class="abs" style="left:1641.00px;top:354.00px" width="22" height="26" viewBox="0 0 22 26"><path d="M2.6,2.6 H19.6 L11.1,10.6Z" fill="#c6c6c6"/><path d="M4.2,22.8 L11.1,16 L18,22.8Z" fill="none" stroke="#c6c6c6" stroke-width="1.5"/><path d="M1,13.2H21.5" stroke="#c6c6c6" stroke-width="1.2" stroke-dasharray="1.6,1.6"/></svg>
<svg class="abs" style="left:1690.00px;top:286.00px" width="32" height="34" viewBox="1690 286 32 34"><g fill="none" stroke="#d6d6d6" stroke-width="2.1" stroke-linecap="round"><path d="M1702.7,295.2 C1702.4,289.6 1711,289.2 1711,295.6 L1711,303.2"/><path d="M1701.9,303.6 L1701.9,310.6 C1701.9,317.4 1710.6,317.2 1710.4,311.4"/></g><path d="M1695.6,292.5 L1717,314.5" stroke="#535353" stroke-width="5"/><path d="M1695.6,292.5 L1717,314.5" stroke="#dadada" stroke-width="2.2" stroke-linecap="round"/></svg>
<div class="abs" style="left:1375.00px;top:480.50px;width:28.00px;height:28.25px;background:#17a69a;border:1px solid #1c1c1c;box-shadow:inset 0 0 0 1.6px #fff"></div>
<svg class="abs" style="left:1375.00px;top:527.00px" width="28" height="28" viewBox="0 0 28 28"><rect x="0.5" y="0.5" width="27" height="27" fill="#fff" stroke="#1c1c1c"/><rect x="9.6" y="9.6" width="8.8" height="8.8" fill="#555" stroke="#111" stroke-width="1.6"/><path d="M1.4,26.6 L26.6,1.4" stroke="#fa0f17" stroke-width="3.2"/></svg>
<div class="abs" style="left:1496.25px;top:524.50px;width:110.50px;height:32.50px;background:#454545;border:1px solid #606060;border-radius:4px;"></div>
<div class="abs" style="left:1523.90px;top:525.50px;width:1.20px;height:30.50px;background:#5b5b5b"></div>
<div class="abs" style="left:1576.90px;top:525.50px;width:1.20px;height:30.50px;background:#5b5b5b"></div>
<svg class="abs" style="left:1502.50px;top:526.30px" width="16" height="12" viewBox="0 0 16 12"><path d="M2.4,9 L8,3 L13.6,9" fill="none" stroke="#e0e0e0" stroke-width="1.6"/></svg>
<svg class="abs" style="left:1502.50px;top:543.50px" width="16" height="12" viewBox="0 0 16 12"><path d="M2.4,3 L8,9 L13.6,3" fill="none" stroke="#e0e0e0" stroke-width="1.6"/></svg>
<svg class="abs" style="left:1582.75px;top:535.00px" width="16" height="12" viewBox="0 0 16 12"><path d="M1.8,2.9 L8,9.1 L14.2,2.9" fill="none" stroke="#e0e0e0" stroke-width="1.6"/></svg>
<div class="abs" style="left:1421.00px;top:550.00px;width:63.00px;height:1.60px;background:repeating-linear-gradient(90deg,#d0d0d0 0 1.2px,transparent 1.2px 2.6px)"></div>
<div class="abs" style="left:1422.00px;top:596.40px;width:59.00px;height:1.60px;background:repeating-linear-gradient(90deg,#d0d0d0 0 1.2px,transparent 1.2px 2.6px)"></div>
<svg class="abs" style="left:1375.75px;top:575.00px" width="26.8" height="25.6" viewBox="0 0 26.8 25.6"><rect x="0.75" y="0.75" width="25.3" height="24.1" fill="#8c8c8c" stroke="#bcbcbc" stroke-width="1.5"/><rect x="1.5" y="1.5" width="6.1" height="5.8" fill="#606060"/><rect x="1.5" y="12.8" width="6.1" height="5.8" fill="#606060"/><rect x="7.45" y="7.15" width="6.1" height="5.8" fill="#606060"/><rect x="7.45" y="18.45" width="6.1" height="5.8" fill="#606060"/><rect x="13.4" y="1.5" width="6.1" height="5.8" fill="#606060"/><rect x="13.4" y="12.8" width="6.1" height="5.8" fill="#606060"/><rect x="19.35" y="7.15" width="6.1" height="5.8" fill="#606060"/><rect x="19.35" y="18.45" width="6.1" height="5.8" fill="#606060"/></svg>
<div class="abs" style="left:1496.25px;top:571.25px;width:110.50px;height:32.00px;background:#454545;border:1px solid #606060;border-radius:4px;"></div>
<div class="abs" style="left:1576.90px;top:572.25px;width:1.20px;height:30.00px;background:#5b5b5b"></div>
<svg class="abs" style="left:1583.00px;top:578.00px" width="14" height="18" viewBox="0 0 14 18"><path d="M4.2,3.4 L10,9.2 L4.2,15" fill="none" stroke="#e0e0e0" stroke-width="1.7"/></svg>
<div class="abs" style="left:1375.75px;top:746.75px;width:349.75px;height:32.00px;background:#454545;border:1px solid #606060;border-radius:4px;"></div>
<div class="abs" style="left:1696.15px;top:747.75px;width:1.20px;height:30.00px;background:#5b5b5b"></div>
<svg class="abs" style="left:1703.00px;top:757.40px" width="16" height="12" viewBox="0 0 16 12"><path d="M1.8,2.9 L8,9.1 L14.2,2.9" fill="none" stroke="#e0e0e0" stroke-width="1.6"/></svg>
<div class="abs" style="left:1375.75px;top:788.25px;width:349.75px;height:32.25px;background:#454545;border:1px solid #606060;border-radius:4px;"></div>
<div class="abs" style="left:1696.15px;top:789.25px;width:1.20px;height:30.25px;background:#5b5b5b"></div>
<svg class="abs" style="left:1703.00px;top:799.00px" width="16" height="12" viewBox="0 0 16 12"><path d="M1.8,2.9 L8,9.1 L14.2,2.9" fill="none" stroke="#e0e0e0" stroke-width="1.6"/></svg>
<svg class="abs" style="left:1377.00px;top:754.00px" width="30" height="20" viewBox="0 0 30 20"><circle cx="12.6" cy="8.4" r="6.1" fill="none" stroke="#c6c6c6" stroke-width="1.7"/><path d="M8.2,12.8 L2.2,18.6" stroke="#c6c6c6" stroke-width="1.9"/><path d="M20.6,13 h7.6 l-3.8,4.2z" fill="#c6c6c6"/></svg>
<div class="abs" style="left:1408.75px;top:830.00px;width:129.25px;height:31.75px;background:#454545;border:1px solid #606060;border-radius:4px;"></div>
<div class="abs" style="left:1436.90px;top:831.00px;width:1.20px;height:29.75px;background:#5b5b5b"></div>
<div class="abs" style="left:1508.65px;top:831.00px;width:1.20px;height:29.75px;background:#5b5b5b"></div>
<svg class="abs" style="left:1415.25px;top:831.00px" width="16" height="12" viewBox="0 0 16 12"><path d="M2.4,9 L8,3 L13.6,9" fill="none" stroke="#e0e0e0" stroke-width="1.6"/></svg>
<svg class="abs" style="left:1415.25px;top:848.20px" width="16" height="12" viewBox="0 0 16 12"><path d="M2.4,3 L8,9 L13.6,3" fill="none" stroke="#e0e0e0" stroke-width="1.6"/></svg>
<svg class="abs" style="left:1514.50px;top:840.20px" width="16" height="12" viewBox="0 0 16 12"><path d="M1.8,2.9 L8,9.1 L14.2,2.9" fill="none" stroke="#e0e0e0" stroke-width="1.6"/></svg>
<div class="abs" style="left:1596.25px;top:830.00px;width:129.25px;height:31.75px;background:#454545;border:1px solid #606060;border-radius:4px;"></div>
<div class="abs" style="left:1623.65px;top:831.00px;width:1.20px;height:29.75px;background:#5b5b5b"></div>
<div class="abs" style="left:1696.15px;top:831.00px;width:1.20px;height:29.75px;background:#5b5b5b"></div>
<svg class="abs" style="left:1602.50px;top:831.00px" width="16" height="12" viewBox="0 0 16 12"><path d="M2.4,9 L8,3 L13.6,9" fill="none" stroke="#e0e0e0" stroke-width="1.6"/></svg>
<svg class="abs" style="left:1602.50px;top:848.20px" width="16" height="12" viewBox="0 0 16 12"><path d="M2.4,3 L8,9 L13.6,3" fill="none" stroke="#e0e0e0" stroke-width="1.6"/></svg>
<svg class="abs" style="left:1702.00px;top:840.20px" width="16" height="12" viewBox="0 0 16 12"><path d="M1.8,2.9 L8,9.1 L14.2,2.9" fill="none" stroke="#e0e0e0" stroke-width="1.6"/></svg>
<div class="abs" style="left:1408.75px;top:871.75px;width:129.25px;height:32.00px;background:#454545;border:1px solid #606060;border-radius:4px;"></div>
<div class="abs" style="left:1436.90px;top:872.75px;width:1.20px;height:30.00px;background:#5b5b5b"></div>
<div class="abs" style="left:1508.65px;top:872.75px;width:1.20px;height:30.00px;background:#5b5b5b"></div>
<svg class="abs" style="left:1415.25px;top:872.90px" width="16" height="12" viewBox="0 0 16 12"><path d="M2.4,9 L8,3 L13.6,9" fill="none" stroke="#e0e0e0" stroke-width="1.6"/></svg>
<svg class="abs" style="left:1415.25px;top:890.10px" width="16" height="12" viewBox="0 0 16 12"><path d="M2.4,3 L8,9 L13.6,3" fill="none" stroke="#e0e0e0" stroke-width="1.6"/></svg>
<svg class="abs" style="left:1514.50px;top:882.00px" width="16" height="12" viewBox="0 0 16 12"><path d="M1.8,2.9 L8,9.1 L14.2,2.9" fill="none" stroke="#e0e0e0" stroke-width="1.6"/></svg>
<div class="abs" style="left:1596.25px;top:871.75px;width:129.25px;height:32.00px;background:#454545;border:1px solid #606060;border-radius:4px;"></div>
<div class="abs" style="left:1623.65px;top:872.75px;width:1.20px;height:30.00px;background:#5b5b5b"></div>
<div class="abs" style="left:1696.15px;top:872.75px;width:1.20px;height:30.00px;background:#5b5b5b"></div>
<svg class="abs" style="left:1602.50px;top:872.90px" width="16" height="12" viewBox="0 0 16 12"><path d="M2.4,9 L8,3 L13.6,9" fill="none" stroke="#e0e0e0" stroke-width="1.6"/></svg>
<svg class="abs" style="left:1602.50px;top:890.10px" width="16" height="12" viewBox="0 0 16 12"><path d="M2.4,3 L8,9 L13.6,3" fill="none" stroke="#e0e0e0" stroke-width="1.6"/></svg>
<svg class="abs" style="left:1702.00px;top:882.00px" width="16" height="12" viewBox="0 0 16 12"><path d="M1.8,2.9 L8,9.1 L14.2,2.9" fill="none" stroke="#e0e0e0" stroke-width="1.6"/></svg>
<svg class="abs" style="left:1383.75px;top:1009.60px" width="27" height="23" viewBox="0 0 27 23"><rect x="0" y="0.1" width="20" height="1.7" fill="#cfcfcf"/><rect x="0" y="5.15" width="24.5" height="1.7" fill="#cfcfcf"/><rect x="0" y="10.2" width="20" height="1.7" fill="#cfcfcf"/><rect x="0" y="15.25" width="24.5" height="1.7" fill="#cfcfcf"/><rect x="0" y="20.3" width="19.2" height="1.7" fill="#cfcfcf"/></svg>
<svg class="abs" style="left:1432.00px;top:1009.60px" width="27" height="23" viewBox="0 0 27 23"><rect x="3.5" y="0.1" width="19" height="1.7" fill="#cfcfcf"/><rect x="0" y="5.15" width="26" height="1.7" fill="#cfcfcf"/><rect x="3.5" y="10.2" width="19" height="1.7" fill="#cfcfcf"/><rect x="0" y="15.25" width="26" height="1.7" fill="#cfcfcf"/><rect x="3.5" y="20.3" width="19" height="1.7" fill="#cfcfcf"/></svg>
<svg class="abs" style="left:1481.75px;top:1009.60px" width="27" height="23" viewBox="0 0 27 23"><rect x="4.5" y="0.1" width="20" height="1.7" fill="#cfcfcf"/><rect x="0" y="5.15" width="24.5" height="1.7" fill="#cfcfcf"/><rect x="4.5" y="10.2" width="20" height="1.7" fill="#cfcfcf"/><rect x="0" y="15.25" width="24.5" height="1.7" fill="#cfcfcf"/><rect x="4.5" y="20.3" width="20" height="1.7" fill="#cfcfcf"/></svg>
<svg class="abs" style="left:1532.50px;top:1009.60px" width="27" height="23" viewBox="0 0 27 23"><rect x="0" y="0.1" width="23" height="1.7" fill="#cfcfcf"/><rect x="0" y="5.15" width="23" height="1.7" fill="#cfcfcf"/><rect x="0" y="10.2" width="23" height="1.7" fill="#cfcfcf"/><rect x="0" y="15.25" width="23" height="1.7" fill="#cfcfcf"/><rect x="0" y="20.3" width="16.2" height="1.7" fill="#cfcfcf"/></svg>
<svg class="abs" style="left:1582.00px;top:1009.60px" width="27" height="23" viewBox="0 0 27 23"><rect x="0" y="0.1" width="23" height="1.7" fill="#cfcfcf"/><rect x="0" y="5.15" width="23" height="1.7" fill="#cfcfcf"/><rect x="0" y="10.2" width="23" height="1.7" fill="#cfcfcf"/><rect x="0" y="15.25" width="23" height="1.7" fill="#cfcfcf"/><rect x="3.5" y="20.3" width="15.7" height="1.7" fill="#cfcfcf"/></svg>
<svg class="abs" style="left:1631.75px;top:1009.60px" width="27" height="23" viewBox="0 0 27 23"><rect x="0" y="0.1" width="22.8" height="1.7" fill="#cfcfcf"/><rect x="0" y="5.15" width="22.8" height="1.7" fill="#cfcfcf"/><rect x="0" y="10.2" width="22.8" height="1.7" fill="#cfcfcf"/><rect x="0" y="15.25" width="22.8" height="1.7" fill="#cfcfcf"/><rect x="7" y="20.3" width="15.8" height="1.7" fill="#cfcfcf"/></svg>
<svg class="abs" style="left:1681.25px;top:1009.60px" width="27" height="23" viewBox="0 0 27 23"><rect x="0" y="0.1" width="23" height="1.7" fill="#cfcfcf"/><rect x="0" y="5.15" width="23" height="1.7" fill="#cfcfcf"/><rect x="0" y="10.2" width="23" height="1.7" fill="#cfcfcf"/><rect x="0" y="15.25" width="23" height="1.7" fill="#cfcfcf"/><rect x="0" y="20.3" width="23" height="1.7" fill="#cfcfcf"/></svg>
<div class="abs" style="left:1375.00px;top:1146.25px;width:159.25px;height:32.50px;background:#505050;border:1px solid #7d7d7d;border-radius:4.5px;"></div>
<div class="abs" style="left:1550.75px;top:1146.25px;width:159.25px;height:32.50px;background:#505050;border:1px solid #7d7d7d;border-radius:4.5px;"></div>
<svg class="abs" style="left:1380px;top:618px;overflow:visible" width="32" height="30" viewBox="1380 618 32 30"><text x="1383.2" y="639.3" font-family="&quot;Liberation Serif&quot;,serif" font-style="italic" font-size="22" fill="#c9c9c9" stroke="#c9c9c9" stroke-width="0.45" textLength="18" lengthAdjust="spacingAndGlyphs">fx</text><path d="M1402,640 h4.8 l-2.4,2.9z" fill="#c9c9c9"/></svg>
<svg class="abs" style="left:1372px;top:828px;overflow:visible" width="36" height="32" viewBox="1372 828 36 32"><g font-family="&quot;Liberation Serif&quot;,serif" font-weight="bold" fill="#cdcdcd"><text x="1374.6" y="855.7" font-size="18.4" textLength="11.6" lengthAdjust="spacingAndGlyphs">T</text><text x="1382.3" y="855.7" font-size="34.5" textLength="22" lengthAdjust="spacingAndGlyphs">T</text></g></svg>
<svg class="abs" style="left:1560px;top:828px;overflow:visible" width="32" height="32" viewBox="1560 828 32 32"><g font-family="&quot;Liberation Sans&quot;,sans-serif" fill="#cdcdcd" font-size="15.4"><text x="1572.8" y="841.3" textLength="15.4" lengthAdjust="spacingAndGlyphs">A</text><text x="1572.8" y="856" textLength="15.4" lengthAdjust="spacingAndGlyphs">A</text></g><path d="M1571.6,842.2H1589.2 M1571.6,856.9H1589.2" stroke="#cdcdcd" stroke-width="1.5"/><path d="M1566.8,845V854" stroke="#cdcdcd" stroke-width="1.5"/><path d="M1563.4,846.4 L1566.8,842 L1570.2,846.4Z M1563.4,852.4 L1566.8,856.8 L1570.2,852.4Z" fill="#cdcdcd"/></svg>
<svg class="abs" style="left:1372px;top:870px;overflow:visible" width="34" height="32" viewBox="1372 870 34 32"><g font-family="&quot;Liberation Sans&quot;,sans-serif" fill="#cdcdcd" font-size="24.6"><text x="1374.4" y="891.3" textLength="13.2" lengthAdjust="spacingAndGlyphs">V</text><text x="1388.4" y="891.3" textLength="13.6" lengthAdjust="spacingAndGlyphs">A</text></g><path d="M1383.4,894.2 L1392.6,872.6" stroke="#cdcdcd" stroke-width="1.5"/><path d="M1393,896.7H1402" stroke="#cdcdcd" stroke-width="1.6"/><path d="M1389.2,896.7 L1394.6,893 V900.4Z" fill="#cdcdcd"/></svg>
<svg class="abs" style="left:1560px;top:870px;overflow:visible" width="34" height="32" viewBox="1560 870 34 32"><rect x="1562" y="873.3" width="28.6" height="17.1" fill="#c9c9c9"/><text x="1563.6" y="889.6" font-family="&quot;Liberation Sans&quot;,sans-serif" font-weight="bold" font-size="19.6" fill="#4d4d4d" textLength="25.6" lengthAdjust="spacingAndGlyphs">VA</text><path d="M1566,896.7H1586.6" stroke="#cdcdcd" stroke-width="1.6"/><path d="M1562,896.7 L1567.4,893 V900.4Z M1590.6,896.7 L1585.2,893 V900.4Z" fill="#cdcdcd"/></svg>
<div class="t" style="left:2.00px;top:115.41px;font-size:17px;color:#6e6e6e;transform:scaleX(1.0209);font-weight:bold;">100% (CMJN/Aperçu GPU)</div>
<div class="t" style="left:1208.80px;top:59.85px;font-size:20.5px;color:#f2f2f2;transform:scaleX(0.9650);font-weight:bold;">Les indispensables</div>
<div class="t" style="left:1497.10px;top:61.29px;font-size:18.8px;color:#8d8d8d;transform:scaleX(0.9247);">Rechercher dans Adobe Stock</div>
<div class="t" style="left:1372.75px;top:131.51px;font-size:18px;color:#ffffff;transform:scaleX(0.9349);font-weight:bold;">Propriétés</div>
<div class="t" style="left:1482.75px;top:131.51px;font-size:18px;color:#c9c9c9;transform:scaleX(0.9032);font-weight:bold;">Calques</div>
<div class="t" style="left:1572.00px;top:131.51px;font-size:18px;color:#c9c9c9;transform:scaleX(0.9327);font-weight:bold;">Bibliothèques</div>
<div class="t" style="left:1374.00px;top:180.61px;font-size:17px;color:#d2d2d2;transform:scaleX(0.9592);">Caractères</div>
<div class="t" style="left:1374.00px;top:232.61px;font-size:17px;color:#d2d2d2;transform:scaleX(1.0247);">Transformation</div>
<div class="t" style="left:1373.25px;top:444.36px;font-size:17px;color:#d2d2d2;transform:scaleX(1.0051);">Aspect</div>
<div class="t" style="left:1373.25px;top:712.61px;font-size:17px;color:#d2d2d2;transform:scaleX(0.9680);">Caractère</div>
<div class="t" style="left:1373.25px;top:966.86px;font-size:17px;color:#d2d2d2;transform:scaleX(0.9821);">Paragraphe</div>
<div class="t" style="left:1373.25px;top:1111.86px;font-size:17px;color:#d2d2d2;transform:scaleX(0.9916);">Sélections rapides</div>
<div class="t" style="left:1427.00px;top:273.61px;font-size:17px;color:#d2d2d2;transform:scaleX(1.0272);">X:</div>
<div class="t" style="left:1427.00px;top:315.61px;font-size:17px;color:#d2d2d2;transform:scaleX(1.0909);">Y:</div>
<div class="t" style="left:1563.25px;top:273.61px;font-size:17px;color:#d2d2d2;transform:scaleX(0.9436);">L :</div>
<div class="t" style="left:1564.00px;top:315.61px;font-size:17px;color:#d2d2d2;transform:scaleX(0.9706);">H:</div>
<div class="t" style="left:1439.00px;top:357.11px;font-size:17px;color:#d2d2d2;">:</div>
<div class="t" style="left:1421.50px;top:486.86px;font-size:17px;color:#d2d2d2;transform:scaleX(0.9935);">Fond</div>
<div class="t" style="left:1420.25px;top:533.11px;font-size:17px;color:#ffffff;transform:scaleX(1.0499);-webkit-text-stroke:0.25px #ffffff;">Contour</div>
<div class="t" style="left:1421.25px;top:578.86px;font-size:17px;color:#ffffff;transform:scaleX(1.0112);-webkit-text-stroke:0.25px #ffffff;">Opacité</div>
<div class="abs" style="left:1456.50px;top:271.61px;width:78.00px;height:23.00px;overflow:hidden"><div class="t" style="left:0;top:2px;font-size:17px;color:#e8e8e8;transform:scaleX(1.0889);">310,083 pt</div></div>
<div class="t" style="left:1456.50px;top:315.61px;font-size:17px;color:#e8e8e8;transform:scaleX(1.0683);">94,506 pt</div>
<div class="t" style="left:1595.75px;top:273.61px;font-size:17px;color:#e8e8e8;transform:scaleX(1.0648);">561,62 pt</div>
<div class="abs" style="left:1595.75px;top:313.61px;width:77.05px;height:23.00px;overflow:hidden"><div class="t" style="left:0;top:2px;font-size:17px;color:#e8e8e8;transform:scaleX(1.1031);">118,315 pt</div></div>
<div class="t" style="left:1454.50px;top:357.61px;font-size:17px;color:#e8e8e8;transform:scaleX(1.0913);">0°</div>
<div class="t" style="left:1503.75px;top:578.61px;font-size:17px;color:#e8e8e8;transform:scaleX(0.9314);">100%</div>
<div class="t" style="left:1417.50px;top:754.44px;font-size:17.5px;color:#ffffff;transform:scaleX(0.9979);-webkit-text-stroke:0.25px #ffffff;">Acier BAT Text Solid</div>
<div class="t" style="left:1385.75px;top:795.94px;font-size:17.5px;color:#ffffff;transform:scaleX(1.0181);-webkit-text-stroke:0.25px #ffffff;">Text Solid</div>
<div class="t" style="left:1444.50px;top:838.11px;font-size:17px;color:#e8e8e8;transform:scaleX(1.0684);">147 pt</div>
<div class="abs" style="left:1630.00px;top:836.11px;width:64.20px;height:23.00px;overflow:hidden"><div class="t" style="left:0;top:2px;font-size:17px;color:#e8e8e8;transform:scaleX(1.1027);">(176,4 pt</div></div>
<div class="t" style="left:1630.00px;top:879.36px;font-size:17px;color:#e8e8e8;">0</div>
<div class="t" style="left:1415.75px;top:1153.94px;font-size:17.5px;color:#ffffff;transform:scaleX(0.9767);-webkit-text-stroke:0.25px #ffffff;">Vectoriser</div>
<div class="t" style="left:1587.50px;top:1153.94px;font-size:17.5px;color:#ffffff;transform:scaleX(0.9987);-webkit-text-stroke:0.25px #ffffff;">Disposition</div>
</div>
</div>
</body></html>
